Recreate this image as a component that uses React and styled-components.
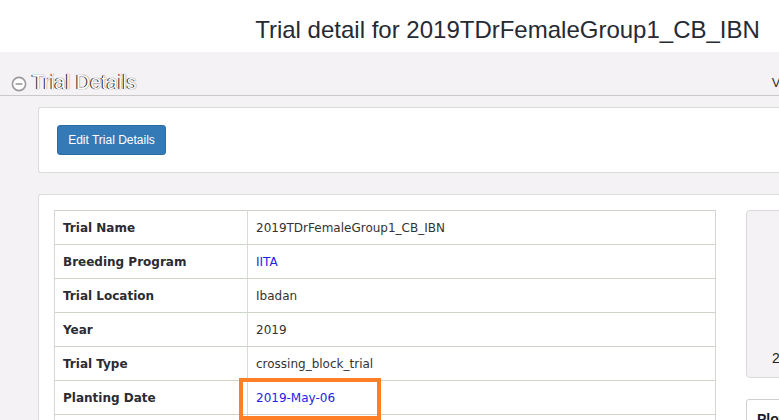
import styled, { createGlobalStyle } from 'styled-components'

const GlobalStyle = createGlobalStyle`
  html, body {
    margin: 0;
    padding: 0;
    background: #fff;
    overflow: hidden;
  }
  * { box-sizing: border-box; }
`

const rows = [
  { label: 'Trial Name', value: '2019TDrFemaleGroup1_CB_IBN' },
  { label: 'Breeding Program', value: 'IITA', link: true },
  { label: 'Trial Location', value: 'Ibadan' },
  { label: 'Year', value: '2019' },
  { label: 'Trial Type', value: 'crossing_block_trial' },
  { label: 'Planting Date', value: '2019-May-06', link: true, marked: true },
  { label: 'Harvest Date', value: '' },
]

const App = () => {
  return (
    <Page>
      <GlobalStyle />
      <Title>Trial detail for 2019TDrFemaleGroup1_CB_IBN</Title>
      <Panel>
        <PanelHeader>
          <Toggle>
            <svg width="16" height="16" viewBox="0 0 16 16">
              <circle cx="8" cy="8" r="6.6" fill="#fff" stroke="#9a9a9a" strokeWidth="1.6" />
              <line x1="4.6" y1="8" x2="11.4" y2="8" stroke="#8a8a8a" strokeWidth="1.4" />
            </svg>
          </Toggle>
          <HeaderTitle>Trial Details</HeaderTitle>
          <HeaderLink>View</HeaderLink>
        </PanelHeader>
        <PanelBody>
          <Well>
            <Button>Edit Trial Details</Button>
          </Well>
          <Well $flush>
            <Columns>
              <MainCol>
                <DetailTable>
                  <tbody>
                    {rows.map((r) => (
                      <tr key={r.label}>
                        <LabelCell>{r.label}</LabelCell>
                        <ValueCell $link={r.link}>
                          {r.value}
                          {r.marked && <Highlight />}
                        </ValueCell>
                      </tr>
                    ))}
                  </tbody>
                </DetailTable>
              </MainCol>
              <SideCol>
                <SummaryBox>
                  <SummaryCount>2</SummaryCount>
                </SummaryBox>
                <PlotBox>
                  <PlotTitle>Plot</PlotTitle>
                </PlotBox>
              </SideCol>
            </Columns>
          </Well>
        </PanelBody>
      </Panel>
    </Page>
  )
}

export default App

const Page = styled.div`
  width: 1012px;
  height: 420px;
  overflow: hidden;
  font-family: "Liberation Sans", Arial, sans-serif;
`

const Title = styled.h2`
  margin: 0;
  height: 52px;
  padding-top: 15px;
  padding-left: 3px;
  text-align: center;
  font-size: 24px;
  font-weight: 400;
  line-height: 30px;
  color: #262a33;
`

const Panel = styled.div`
  background: #f4f2f5;
  min-height: 368px;
`

const PanelHeader = styled.div`
  display: flex;
  align-items: center;
  height: 44px;
  padding-left: 11px;
  padding-top: 18px;
  border-bottom: 1px solid #c9c9c9;
`

const Toggle = styled.span`
  display: flex;
  width: 16px;
  height: 16px;
  margin-top: 2px;
`

const HeaderTitle = styled.span`
  margin-left: 5px;
  font-size: 20px;
  color: #ffffff;
  text-shadow: -1px 0 0 #1e1e30, 0 0 1px #333;
`

const HeaderLink = styled.span`
  margin-left: 635px;
  font-size: 13px;
  color: #333;
`

const PanelBody = styled.div`
  padding: 11px 0 0 38px;
  display: flex;
  flex-direction: column;
  gap: 21px;
`

const Well = styled.div`
  background: #fff;
  border: 1px solid #dcdcdc;
  border-right: none;
  border-radius: 3px 0 0 3px;
  padding: ${(p) => (p.$flush ? '15px 0 0 15px' : '17px 18px 17px 18px')};
`

const Button = styled.button`
  display: block;
  width: 109px;
  height: 30px;
  padding: 0;
  border: 1px solid #2e6da4;
  border-radius: 3px;
  background: #337ab7;
  color: #fff;
  font-family: "Liberation Sans", Arial, sans-serif;
  font-size: 12px;
`

const Columns = styled.div`
  display: flex;
  gap: 30px;
  align-items: flex-start;
`

const MainCol = styled.div`
  flex: 0 0 662px;
`

const DetailTable = styled.table`
  width: 100%;
  border-collapse: collapse;
  border: 1px solid #d6d8d4;
  font-family: "DejaVu Sans", Verdana, sans-serif;
  font-size: 12px;

  td {
    height: 34px;
    padding: 0 8px;
    border-top: 1px solid #cdd5cb;
    border-bottom: 1px solid #cdd5cb;
  }
`

const LabelCell = styled.td`
  width: 193px;
  font-weight: 700;
  color: #2b2b33;
  border-right: 1px solid #d8dbd6;
`

const ValueCell = styled.td`
  position: relative;
  color: ${(p) => (p.$link ? '#2323e8' : '#333')};
`

const Highlight = styled.span`
  position: absolute;
  left: -9px;
  top: -3px;
  width: 142px;
  height: 42px;
  border: 4px solid #ff7f27;
`

const SideCol = styled.div`
  display: flex;
  flex-direction: column;
  gap: 21px;
  flex: 0 0 300px;
`

const SummaryBox = styled.div`
  height: 168px;
  background: #f4f2f5;
  border: 1px solid #dadada;
  border-radius: 4px;
  display: flex;
  align-items: flex-end;
  padding: 0 0 11px 25px;
`

const SummaryCount = styled.span`
  font-size: 14px;
  color: #222;
`

const PlotBox = styled.div`
  height: 60px;
  background: #fff;
  border: 1px solid #d0d0d0;
  border-radius: 3px;
  padding: 10px 10px;
`

const PlotTitle = styled.span`
  font-size: 14px;
  font-weight: 700;
  color: #1c1c2a;
`
